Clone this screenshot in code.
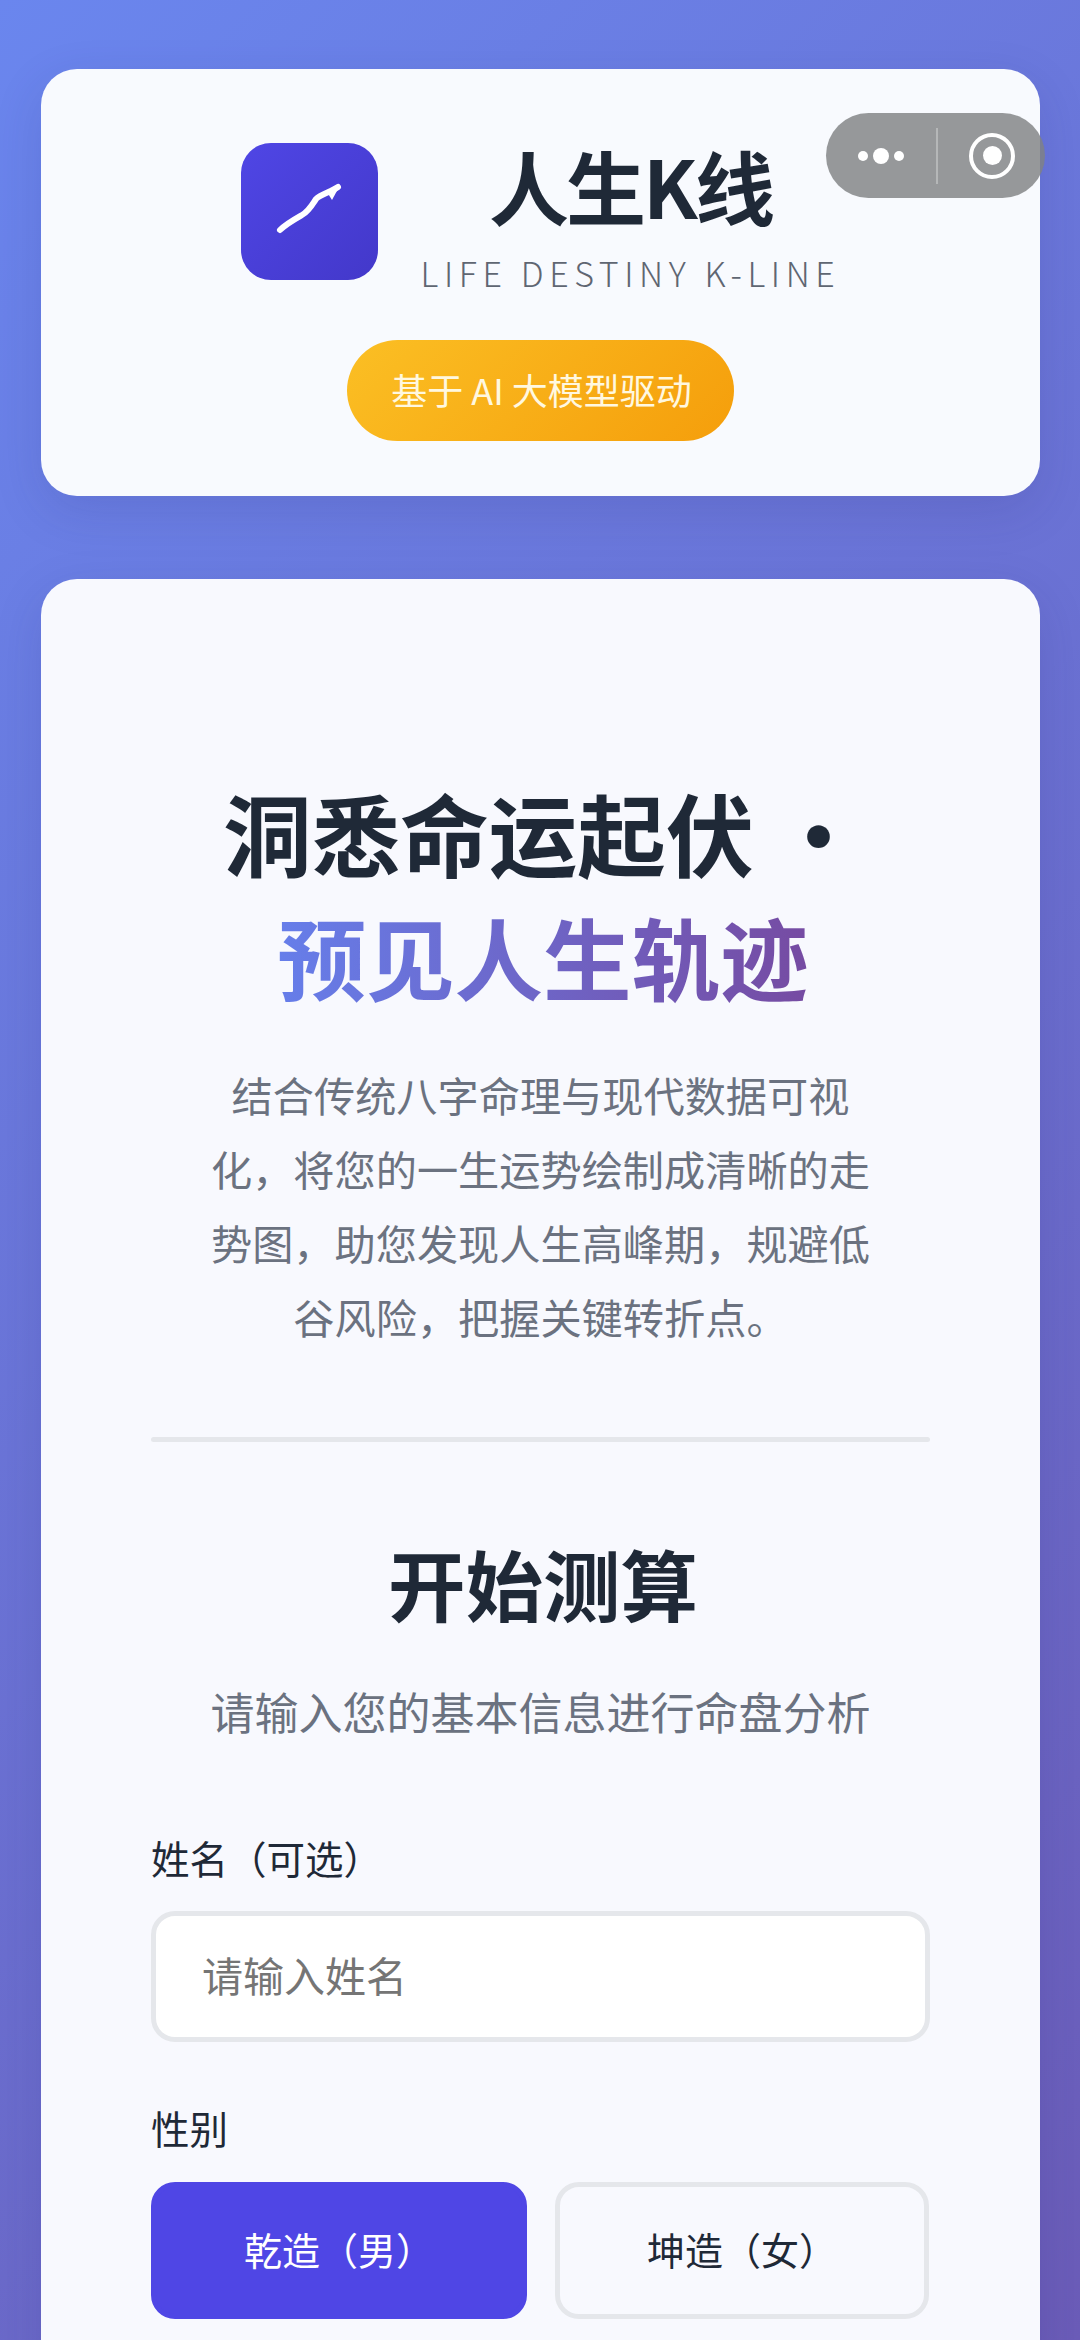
<div class="page">
  <section class="card head">
    <div class="brand">
      <div class="logo">
        <svg viewBox="0 0 137 137" width="137" height="137" aria-hidden="true">
          <path d="M39 87 C45 81 54 76 61 72 C68 68 71 62 75 56 C80 51 90 49 97 44" fill="none" stroke="#fff" stroke-width="6" stroke-linecap="round" stroke-linejoin="round"/>
          <path d="M86 49 L91 57 L97 46 Z" fill="#fff"/>
        </svg>
      </div>
      <div class="brand-text">
        <h1>人生K线</h1>
        <p>LIFE DESTINY K-LINE</p>
      </div>
    </div>
    <div class="pill">基于 AI 大模型驱动</div>
  </section>

  <div class="capsule">
    <div class="dots"><i class="s"></i><i class="b"></i><i class="s"></i></div>
    <span class="sep"></span>
    <div class="target"><i></i></div>
  </div>

  <section class="card main">
    <h2 class="hero">洞悉命运起伏 · <span>预见人生轨迹</span></h2>
    <p class="lead">结合传统八字命理与现代数据可视化，将您的一生运势绘制成清晰的走势图，助您发现人生高峰期，规避低谷风险，把握关键转折点。</p>
    <hr />
    <h3>开始测算</h3>
    <p class="sub">请输入您的基本信息进行命盘分析</p>
    <div class="label first">姓名（可选）</div>
    <div class="input">请输入姓名</div>
    <div class="label second">性别</div>
    <div class="gender">
      <button class="on">乾造（男）</button>
      <button>坤造（女）</button>
    </div>
  </section>
</div>

<style>
  :global(body) {
    margin: 0;
    font-family: "Noto Sans CJK SC", "Noto Sans", sans-serif;
  }
  .page {
    position: relative;
    height: 2340px;
    overflow: hidden;
    box-sizing: border-box;
    padding: 69px 40px 0 41px;
    background: linear-gradient(135deg, #6a86ee 0%, #6b5cb8 100%);
  }
  .card {
    background: #f8fafe;
    border-radius: 36px;
    box-shadow: 0 16px 50px rgba(40, 40, 110, 0.14);
  }
  .head {
    height: 427px;
    box-sizing: border-box;
    padding-top: 74px;
    display: flex;
    flex-direction: column;
    align-items: center;
  }
  .brand {
    display: flex;
    align-items: flex-start;
    gap: 43px;
  }
  .logo {
    width: 137px;
    height: 137px;
    border-radius: 30px;
    background: linear-gradient(135deg, #4f46e5, #4338ca);
  }
  .logo svg { display: block; }
  .brand-text {
    display: flex;
    flex-direction: column;
    align-items: center;
  }
  h1 {
    margin: -4px 0 0;
    font-size: 80px;
    line-height: 90px;
    font-weight: 700;
    letter-spacing: -3px;
    color: #1f2937;
  }
  .brand-text p {
    margin: 22px 0 0;
    font-size: 34px;
    line-height: 44px;
    letter-spacing: 5.6px;
    font-weight: 300;
    color: #5f6672;
    white-space: nowrap;
  }
  .pill {
    margin-top: 45px;
    width: 387px;
    height: 101px;
    box-sizing: border-box;
    padding: 0 0 3px 2px;
    border-radius: 51px;
    display: flex;
    align-items: center;
    justify-content: center;
    font-size: 36px;
    color: #fff8e0;
    background: linear-gradient(135deg, #fbbf24, #f59e0b);
  }
  .capsule {
    position: absolute;
    left: 826px;
    top: 113px;
    width: 219px;
    height: 85px;
    border-radius: 43px;
    background: rgba(128, 130, 132, 0.82);
    display: flex;
    align-items: center;
  }
  .dots {
    width: 110px;
    display: flex;
    align-items: center;
    justify-content: center;
    gap: 5px;
    box-sizing: border-box;
  }
  .dots i { display: block; border-radius: 50%; background: #fff; }
  .dots .s { width: 10px; height: 10px; }
  .dots .b { width: 16px; height: 16px; }
  .sep { width: 2px; height: 56px; background: rgba(255,255,255,0.3); }
  .target {
    margin-left: 31px;
    width: 46px;
    height: 46px;
    box-sizing: border-box;
    border: 4px solid #fff;
    border-radius: 50%;
    display: flex;
    align-items: center;
    justify-content: center;
  }
  .target i { display: block; width: 19px; height: 19px; border-radius: 50%; background: #fff; }
  .main {
    margin-top: 83px;
    height: 1900px;
    box-sizing: border-box;
    padding: 190px 110px 0;
    text-align: center;
    background: #f8f9fe;
  }
  .hero {
    margin: 0 auto;
    padding-left: 5px;
    font-size: 88.5px;
    line-height: 124px;
    font-weight: 700;
    color: #1f2937;
  }
  .hero span {
    display: block;
    width: max-content;
    margin: 0 auto;
    background: linear-gradient(90deg, #667eea, #764ba2);
    -webkit-background-clip: text;
    background-clip: text;
    color: transparent;
  }
  .lead {
    margin: 40px 0 0;
    padding: 0 50px;
    font-size: 41.2px;
    line-height: 74px;
    color: #6b7280;
  }
  hr {
    margin: 84px 0 0;
    border: 0;
    height: 5px;
    border-radius: 3px;
    background: #e5e7eb;
  }
  h3 {
    margin: 87px 0 0;
    padding-left: 5px;
    font-size: 77.5px;
    line-height: 106px;
    font-weight: 700;
    color: #1f2937;
  }
  .sub {
    margin: 46px 0 0;
    font-size: 44px;
    line-height: 60px;
    color: #6b7280;
  }
  .label {
    text-align: left;
    font-size: 38.5px;
    line-height: 54px;
    color: #1f2937;
  }
  .first { margin-top: 89px; }
  .second { margin-top: 58px; }
  .input {
    margin-top: 27px;
    height: 131px;
    box-sizing: border-box;
    border: 5px solid #e5e7eb;
    border-radius: 24px;
    background: #fff;
    padding: 0 0 6px 46px;
    display: flex;
    align-items: center;
    font-size: 41px;
    color: #757575;
    text-align: left;
  }
  .gender {
    margin-top: 28px;
    display: grid;
    grid-template-columns: 376px 374px;
    gap: 28px;
  }
  button {
    height: 137px;
    box-sizing: border-box;
    border: 5px solid #e5e7eb;
    border-radius: 24px;
    background: #f8f9fe;
    font: inherit;
    font-size: 38px;
    color: #1f2937;
    padding: 0 0 5px;
  }
  button.on {
    background: #4f46e5;
    border-color: #4f46e5;
    color: #fff;
  }
</style>
